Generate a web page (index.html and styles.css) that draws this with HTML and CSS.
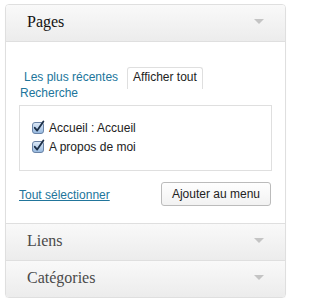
FILE: index.html
```html
<!DOCTYPE html>
<html lang="fr">
<head>
<meta charset="utf-8">
<title>Pages</title>
<link rel="stylesheet" href="styles.css">
</head>
<body>
<div class="accordion">
  <section class="section open">
    <h3 class="section-title"><span>Pages</span><i class="arrow"></i></h3>
    <div class="section-body">
      <ul class="tabs">
        <li class="tab"><a href="#">Les plus récentes</a></li>
        <li class="tab active">Afficher tout</li>
        <li class="tab tab-search"><a href="#">Recherche</a></li>
      </ul>
      <div class="list-box">
        <label class="item">
          <svg class="cb" width="14" height="14" viewBox="0 0 14 14">
            <defs>
              <linearGradient id="g1" x1="0" y1="0" x2="0" y2="1">
                <stop offset="0" stop-color="#dfeaf7"/>
                <stop offset="1" stop-color="#95b8df"/>
              </linearGradient>
            </defs>
            <rect x="0.5" y="2.5" width="11" height="11" rx="2.5" fill="url(#g1)" stroke="#6a83a6"/>
            <path d="M2.8 7.8 L5.2 10.6 L11.4 1.4" fill="none" stroke="#1c2f48" stroke-width="1.8" stroke-linecap="round" stroke-linejoin="round"/>
          </svg>
          <span>Accueil : Accueil</span>
        </label>
        <label class="item">
          <svg class="cb" width="14" height="14" viewBox="0 0 14 14">
            <rect x="0.5" y="2.5" width="11" height="11" rx="2.5" fill="url(#g1)" stroke="#6a83a6"/>
            <path d="M2.8 7.8 L5.2 10.6 L11.4 1.4" fill="none" stroke="#1c2f48" stroke-width="1.8" stroke-linecap="round" stroke-linejoin="round"/>
          </svg>
          <span>A propos de moi</span>
        </label>
      </div>
      <div class="actions">
        <a href="#" class="select-all">Tout sélectionner</a>
        <button class="button" type="button">Ajouter au menu</button>
      </div>
    </div>
  </section>
  <section class="section">
    <h3 class="section-title"><span>Liens</span><i class="arrow"></i></h3>
  </section>
  <section class="section">
    <h3 class="section-title"><span>Catégories</span><i class="arrow"></i></h3>
  </section>
</div>
</body>
</html>
```

FILE: styles.css
```css
html, body {
  margin: 0;
  padding: 0;
  background: #fff;
}

body {
  font-family: "Liberation Sans", Arial, sans-serif;
  font-size: 12px;
  color: #333;
}

.accordion {
  margin: 4px 0 0 5px;
  width: 281px;
  box-sizing: border-box;
  border: 1px solid #dfdfdf;
  border-radius: 4px;
  overflow: hidden;
  box-shadow: 0 1px 1px rgba(0, 0, 0, 0.04);
}

.section + .section {
  border-top: 1px solid #dfdfdf;
}

.section-title {
  margin: 0;
  height: 36px;
  box-sizing: border-box;
  padding: 0 21px;
  display: flex;
  align-items: center;
  justify-content: space-between;
  background: linear-gradient(to bottom, #f9f9f9, #ececec);
  font-family: "Liberation Serif", Georgia, serif;
  font-weight: normal;
  font-size: 16px;
  line-height: 33px;
  color: #4a4a4a;
}

.open .section-title {
  color: #111;
  border-bottom: 1px solid #dfdfdf;
  height: 37px;
}

.section-title span {
  padding-bottom: 3px;
}

.arrow {
  width: 0;
  height: 0;
  border-left: 5px solid transparent;
  border-right: 5px solid transparent;
  border-top: 5px solid #c4c4c4;
  margin-bottom: 3px;
}

.section-body {
  padding: 25px 13px 17px;
  background: #fff;
}

.tabs {
  list-style: none;
  margin: 0;
  padding: 0;
  display: flex;
  flex-wrap: wrap;
  max-width: 200px;
  line-height: 16px;
}

.tab {
  padding: 1px 4px 4px;
  border: 1px solid transparent;
  border-bottom: 0;
  margin-right: 4px;
}

.tab a {
  color: #21759b;
  text-decoration: none;
}

.tab.active {
  padding: 1px 5px 4px;
  border-color: #dfdfdf;
  border-radius: 3px 3px 0 0;
  color: #222;
  background: #fff;
}

.tab-search {
  padding: 0 1px;
  border: 0;
  margin-top: -4px;
}

.list-box {
  margin-top: 4px;
  border: 1px solid #dfdfdf;
  padding: 13px 12px 13px;
  line-height: 19px;
}

.item {
  display: flex;
  align-items: center;
  gap: 3px;
  color: #222;
}

.cb {
  display: block;
  margin-top: -3px;
}

.actions {
  margin-top: 11px;
  display: flex;
  align-items: center;
  justify-content: space-between;
  padding-right: 1px;
}

.select-all {
  color: #21759b;
  text-decoration: underline;
  margin-top: 2px;
}

.button {
  height: 24px;
  box-sizing: border-box;
  padding: 0 10px;
  border: 1px solid #bbb;
  border-radius: 3px;
  background: linear-gradient(to bottom, #fefefe, #f2f2f2);
  font-family: "Liberation Sans", Arial, sans-serif;
  font-size: 12px;
  line-height: 16px;
  color: #222;
}
```
